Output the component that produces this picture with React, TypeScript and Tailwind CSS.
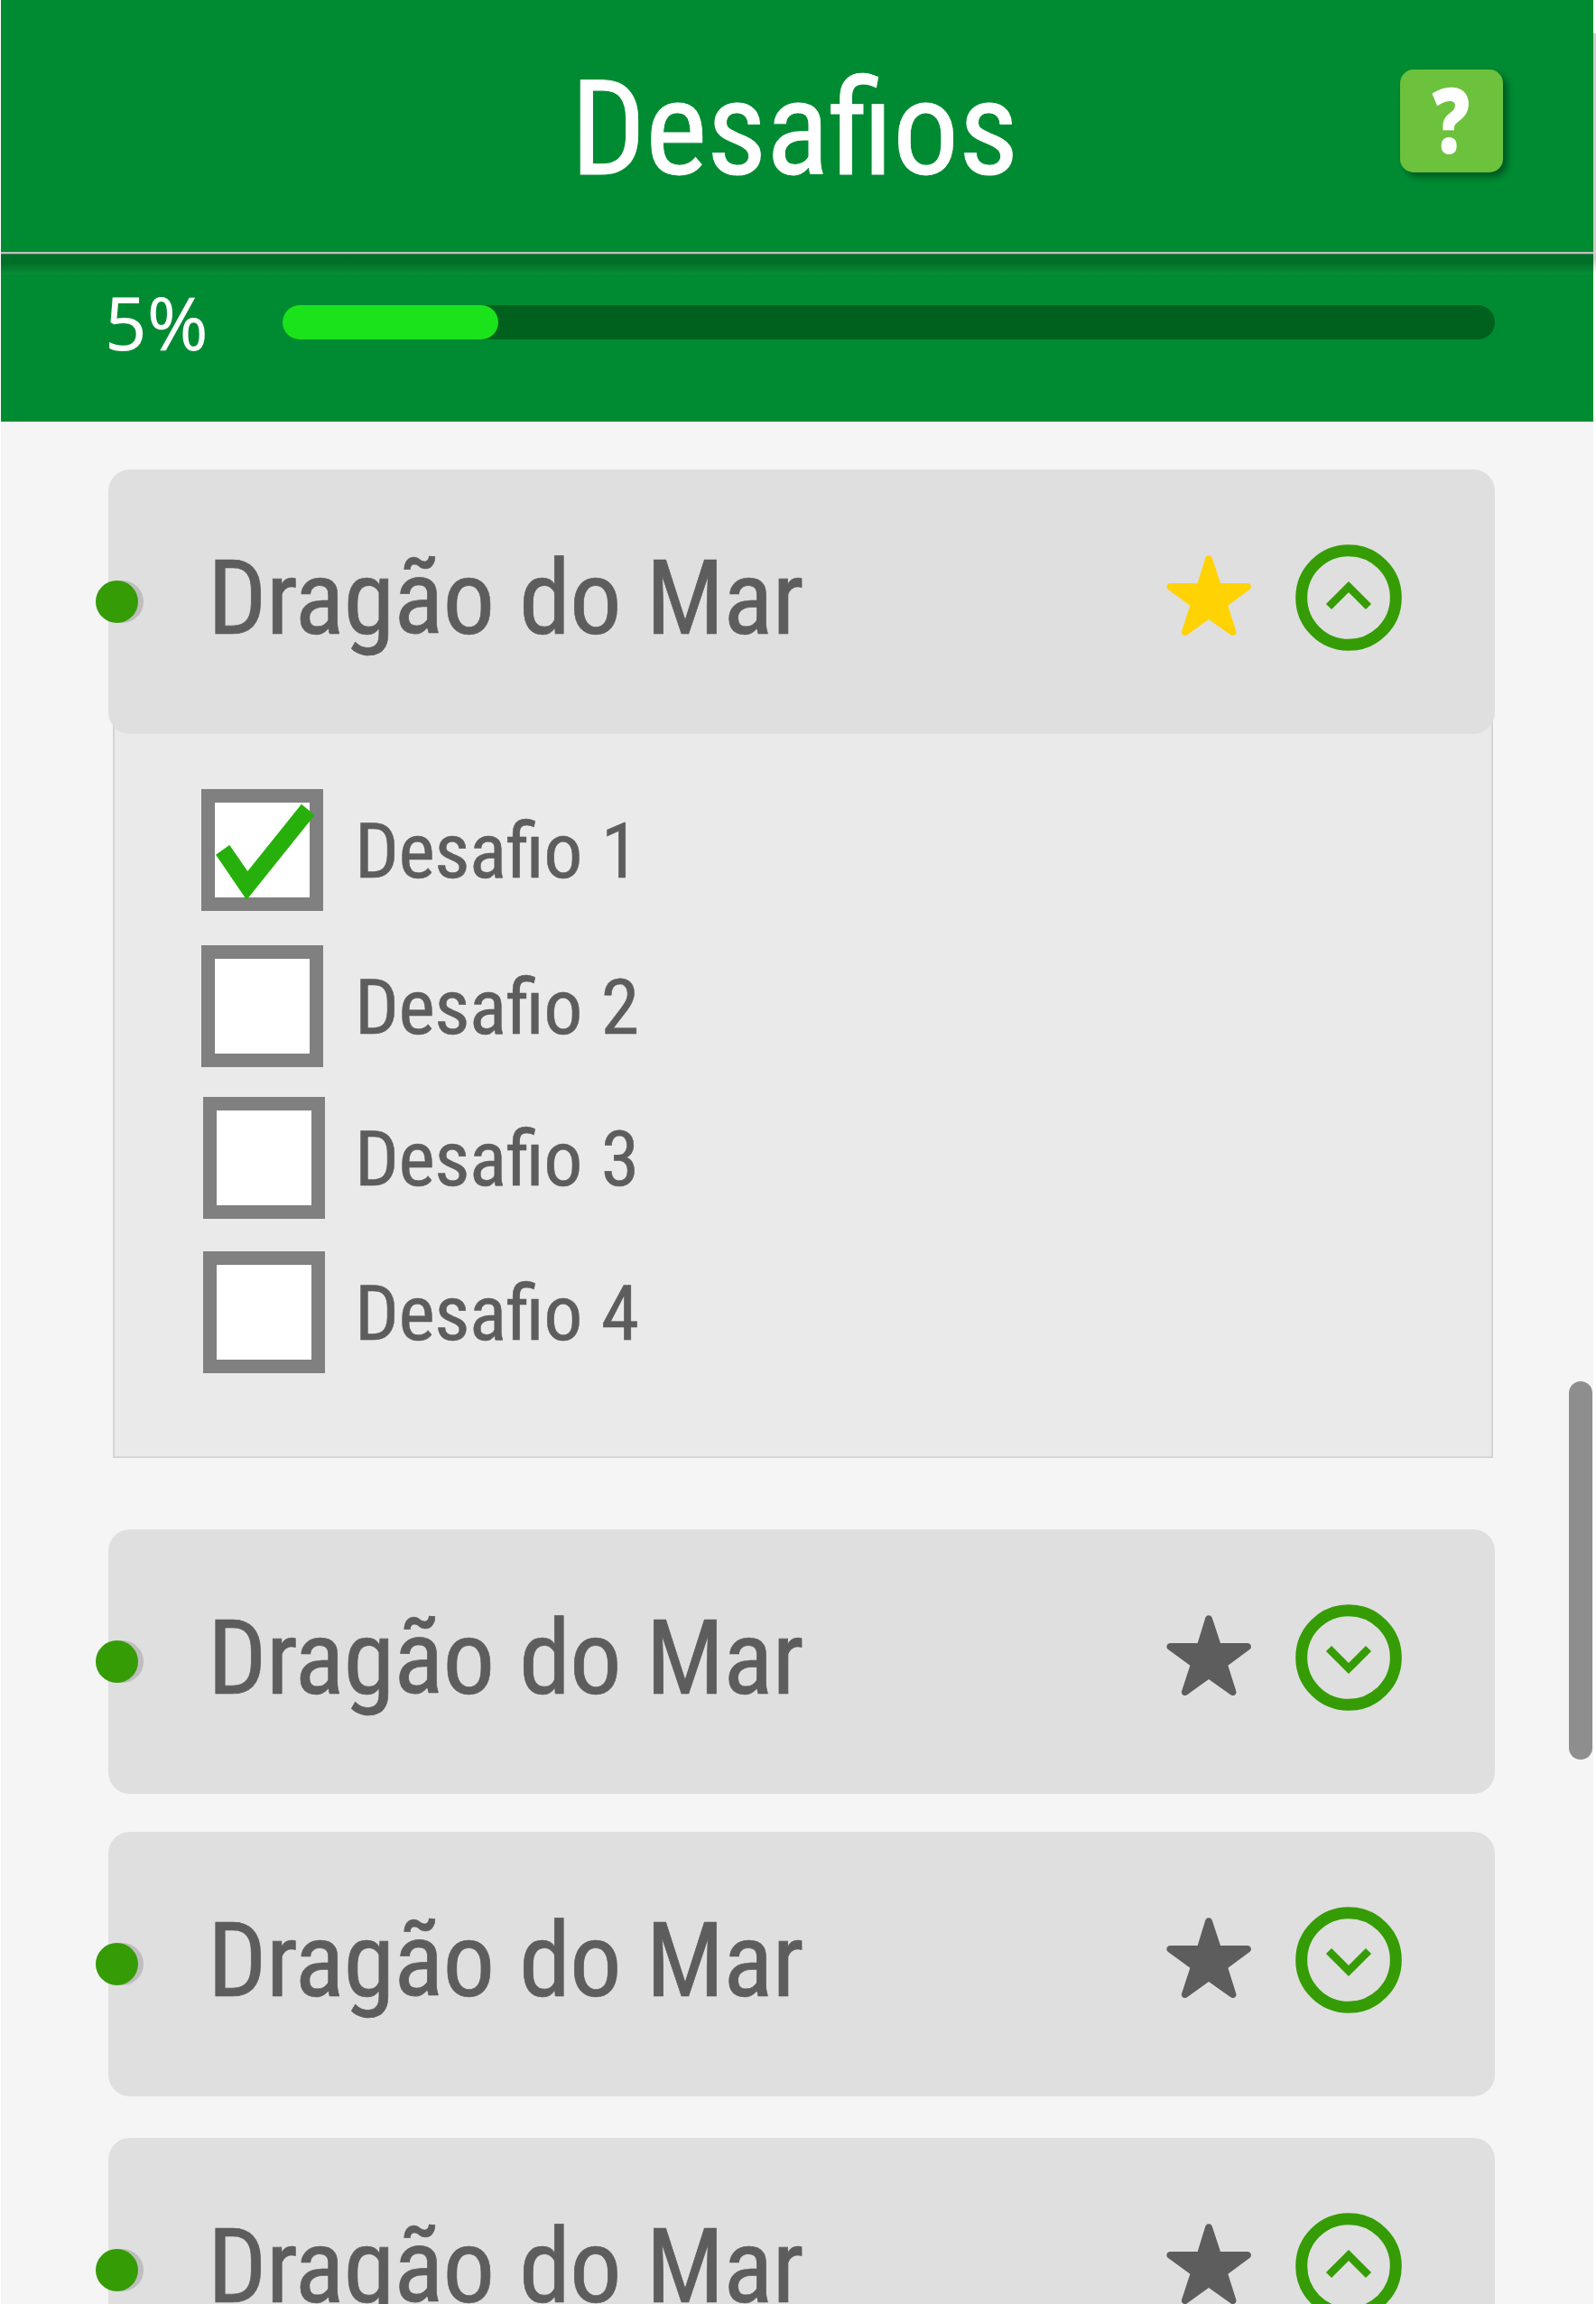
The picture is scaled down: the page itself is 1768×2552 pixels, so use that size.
const ROBOTO = "font-['Roboto_Condensed','Roboto',sans-serif] font-stretch-condensed font-normal [-webkit-text-stroke:0.006em_currentColor] [font-feature-settings:'liga'_1]";

function Star({ active }: { active: boolean }) {
  return (
    <svg viewBox="155 165 282 268" className={active ? "h-[89.3px] w-[94px] text-[#ffd203]" : "h-[89.3px] w-[94px] text-[#5d5d5d]"}>
      <path
        fill="currentColor"
        d="M259 258L285 173a12 12 0 0 1 22 0L335 258H426a11.5 11.5 0 0 1 7 20L360 332L387 418a11.5 11.5 0 0 1-18 12L296 378L224 430a11.5 11.5 0 0 1-18-12L234 332L160 278a11.5 11.5 0 0 1 7-20Z"
      />
    </svg>
  );
}

function Toggle({ open }: { open: boolean }) {
  return (
    <svg viewBox="0 0 118 118" className={open ? "size-[118px]" : "size-[118px] rotate-180"} fill="none" stroke="#359c05">
      <circle cx="59" cy="59" r="52.3" strokeWidth="13" />
      <path d="M37 69L59 47L81 69" strokeWidth="8.6" />
    </svg>
  );
}

function ItemHeader({ active = false, open = false }: { active?: boolean; open?: boolean }) {
  return (
    <div className="relative z-10 flex h-[293px] w-[1536px] items-start rounded-[24px] bg-[#dfdfdf] pl-[110px]">
      <span className="absolute top-[123px] left-[-14px] size-[47px] rounded-full bg-[#359c05] shadow-[6px_0_0_#bebebe]" />
      <h2 className={`${ROBOTO} mt-[73px] w-[1061.7px] text-[115px] leading-[140px] tracking-[-0.0085em] whitespace-nowrap text-[#5d5d5d] [word-spacing:0.02em]`}>
        Dragão do Mar
      </h2>
      <div className="mt-[95.3px] shrink-0">
        <Star active={active} />
      </div>
      <button className="mt-[83px] ml-[49px] shrink-0">
        <Toggle open={open} />
      </button>
    </div>
  );
}

function Challenge({ label, checked = false }: { label: string; checked?: boolean }) {
  return (
    <>
      <span className="relative block size-[135px] shrink-0 border-[15px] border-[#808080] bg-white">
        {checked && (
          <svg viewBox="0 0 135 135" className="absolute -top-[15px] -left-[15px] size-[135px]">
            <path fill="#27b00b" d="M16 72.7L31.3 62L51.3 91L110.9 16.7L125.6 28.7L50.2 122.7Z" />
          </svg>
        )}
      </span>
      <span className={`${ROBOTO} pt-[19px] text-[86px] leading-[100px] tracking-[-0.0065em] whitespace-nowrap text-[#5d5d5d] [word-spacing:0.02em]`}>
        {label}
      </span>
    </>
  );
}

export default function App() {
  return (
    <div className="relative h-[2552px] w-[1768px] overflow-hidden bg-white pl-px">
      <div className="h-[2552px] w-[1764px] bg-[#f5f5f5]">
        <header className="flex h-[279px] items-start bg-[#008b32]">
          <h1 className={`${ROBOTO} mt-[57px] ml-[631px] w-[919px] text-[146.7px] leading-[172px] tracking-[-0.0065em] whitespace-nowrap text-white`}>Desafios</h1>
          <button className="mt-[77px] flex size-[114px] shrink-0 items-center justify-center rounded-[15px] bg-[#6cc13d] shadow-[5px_5px_7px_rgba(0,50,20,0.55)]">
            <span className="-mt-[7px] inline-block scale-x-[0.82] font-['Noto_Sans',sans-serif] text-[101px] leading-[114px] font-black text-white">?</span>
          </button>
        </header>
        <div className="h-[3px] border-b border-[#3f7f55] bg-[#bdc2bd]" />
        <section className="h-[185px] bg-[#008b32]">
          <div className="h-[22px] bg-linear-to-b from-[#006f28] from-40% to-[#0b8d38]" />
          <div className="flex items-start pl-[115px]">
            <span className="-mt-[3px] w-[197px] origin-left scale-x-[0.985] font-['Noto_Sans',sans-serif] text-[83px] leading-[110px] text-white">5%</span>
            <div className="mt-[34px] h-[38px] w-[1343px] rounded-full bg-[#00611f]">
              <div className="h-full w-[238.5px] rounded-full bg-[#1ae31c]" />
            </div>
          </div>
        </section>
        <main className="ml-[119px]">
          <div className="mt-[53px]">
            <ItemHeader active open />
            <div className="-mt-[25px] ml-[5px] h-[827px] w-[1529px] border-2 border-[#d5d5d5] bg-[#eaeaea] pt-[84px] pl-[96px]">
              <div className="flex h-[173px] gap-[35px]"><Challenge label="Desafio 1" checked /></div>
              <div className="flex h-[168.4px] gap-[35px]"><Challenge label="Desafio 2" /></div>
              <div className="flex h-[170.6px] gap-[33px] pl-[2px]"><Challenge label="Desafio 3" /></div>
              <div className="flex gap-[33px] pl-[2px]"><Challenge label="Desafio 4" /></div>
            </div>
          </div>
          <div className="mt-[79px]"><ItemHeader /></div>
          <div className="mt-[42px]"><ItemHeader /></div>
          <div className="mt-[45.5px]"><ItemHeader open /></div>
        </main>
      </div>
      <div className="absolute top-[37px] right-0 h-[266px] w-[3px] bg-linear-to-b from-[#d0cdce] from-94% to-white" />
      <div className="absolute top-[1530px] left-[1738px] h-[418.5px] w-[26px] rounded-full bg-[#8e8e8e]" />
    </div>
  );
}
